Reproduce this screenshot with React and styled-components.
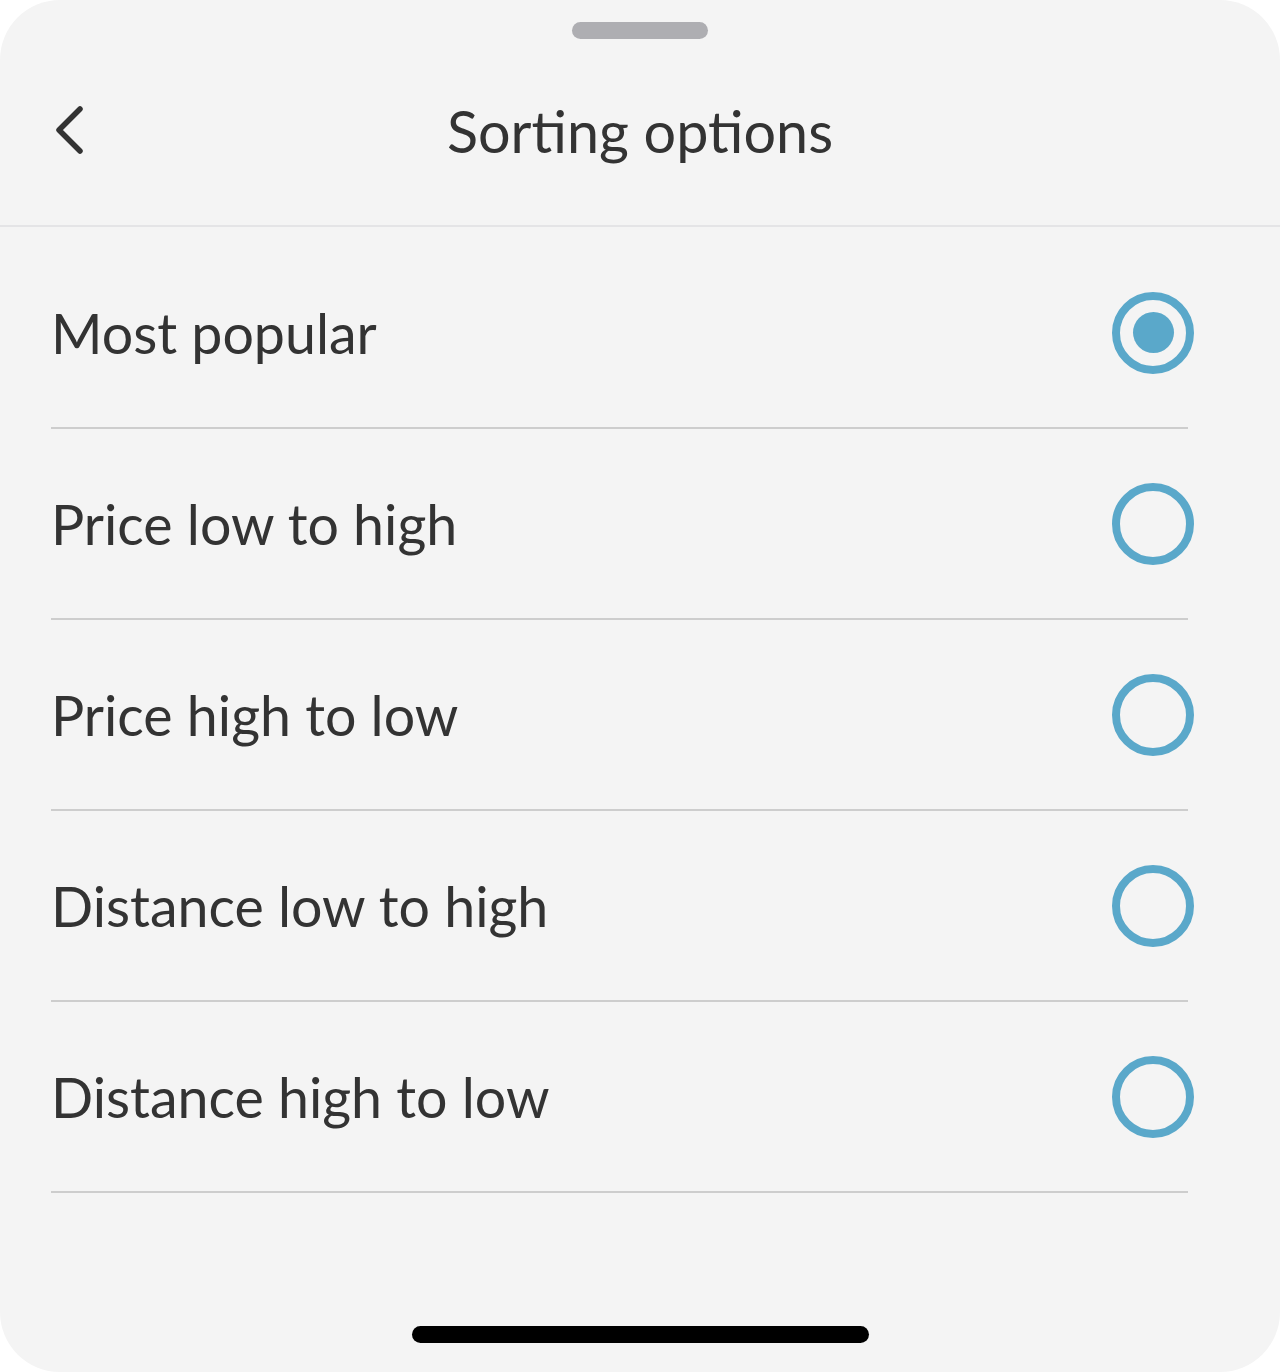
import React, { useState } from "react";
import styled, { createGlobalStyle } from "styled-components";

const Global = createGlobalStyle`
  html, body { margin: 0; padding: 0; background: #ffffff; }
  body { font-family: "Lato", "Noto Sans", sans-serif; }
  * { box-sizing: border-box; }
`;

const Sheet = styled.div`
  width: 1280px;
  height: 1372px;
  background: #f4f4f4;
  border-radius: 60px;
  display: flex;
  flex-direction: column;
  overflow: hidden;
`;

const HandleArea = styled.div`
  display: flex;
  justify-content: center;
  padding-top: 22px;
`;

const Handle = styled.div`
  width: 136px;
  height: 17px;
  border-radius: 9px;
  background: #aeaeb2;
`;

const Header = styled.header`
  display: grid;
  grid-template-columns: 120px 1fr 120px;
  align-items: center;
  height: 188px;
  padding-bottom: 4px;
  border-bottom: 2px solid #e4e4e6;
`;

const BackButton = styled.button`
  border: 0;
  background: none;
  padding: 0 0 0 53px;
  display: flex;
  align-items: center;
  cursor: pointer;
`;

const Title = styled.h1`
  margin: 0;
  text-align: center;
  font-size: 57.5px;
  font-weight: 400;
  color: #333333;
`;

const List = styled.ul`
  list-style: none;
  margin: 0;
  padding: 11px 0 0;
  display: flex;
  flex-direction: column;
`;

const Row = styled.li`
  height: 191px;
  margin: 0 92px 0 51px;
  display: flex;
  align-items: center;
  justify-content: space-between;
  border-bottom: 2px solid #cdcdcd;
  cursor: pointer;
`;

const Label = styled.span`
  font-size: 55.5px;
  color: #333333;
`;

const Radio = styled.span`
  width: 82px;
  height: 82px;
  margin-right: -6px;
  border-radius: 50%;
  border: 8px solid #5aa8ca;
  display: flex;
  align-items: center;
  justify-content: center;
  &::after {
    content: "";
    width: 41px;
    height: 41px;
    border-radius: 50%;
    background: #5aa8ca;
    display: ${(p) => (p.$checked ? "block" : "none")};
  }
`;

const Spacer = styled.div`
  flex: 1;
`;

const HomeArea = styled.div`
  display: flex;
  justify-content: center;
  padding-bottom: 29px;
`;

const HomeIndicator = styled.div`
  width: 457px;
  height: 17px;
  border-radius: 9px;
  background: #000000;
`;

const options = [
  "Most popular",
  "Price low to high",
  "Price high to low",
  "Distance low to high",
  "Distance high to low",
];

export default function App() {
  const [selected, setSelected] = useState(0);
  return (
    <>
      <Global />
      <Sheet>
        <HandleArea>
          <Handle />
        </HandleArea>
        <Header>
          <BackButton aria-label="Back">
            <svg width="32" height="50" viewBox="0 0 32 50" fill="none">
              <path
                d="M27 4 L6 25 L27 46"
                stroke="#333333"
                strokeWidth="5.5"
                strokeLinecap="round"
                strokeLinejoin="round"
              />
            </svg>
          </BackButton>
          <Title>Sorting options</Title>
          <div />
        </Header>
        <List>
          {options.map((o, i) => (
            <Row key={o} onClick={() => setSelected(i)}>
              <Label>{o}</Label>
              <Radio $checked={selected === i} />
            </Row>
          ))}
        </List>
        <Spacer />
        <HomeArea>
          <HomeIndicator />
        </HomeArea>
      </Sheet>
    </>
  );
}
